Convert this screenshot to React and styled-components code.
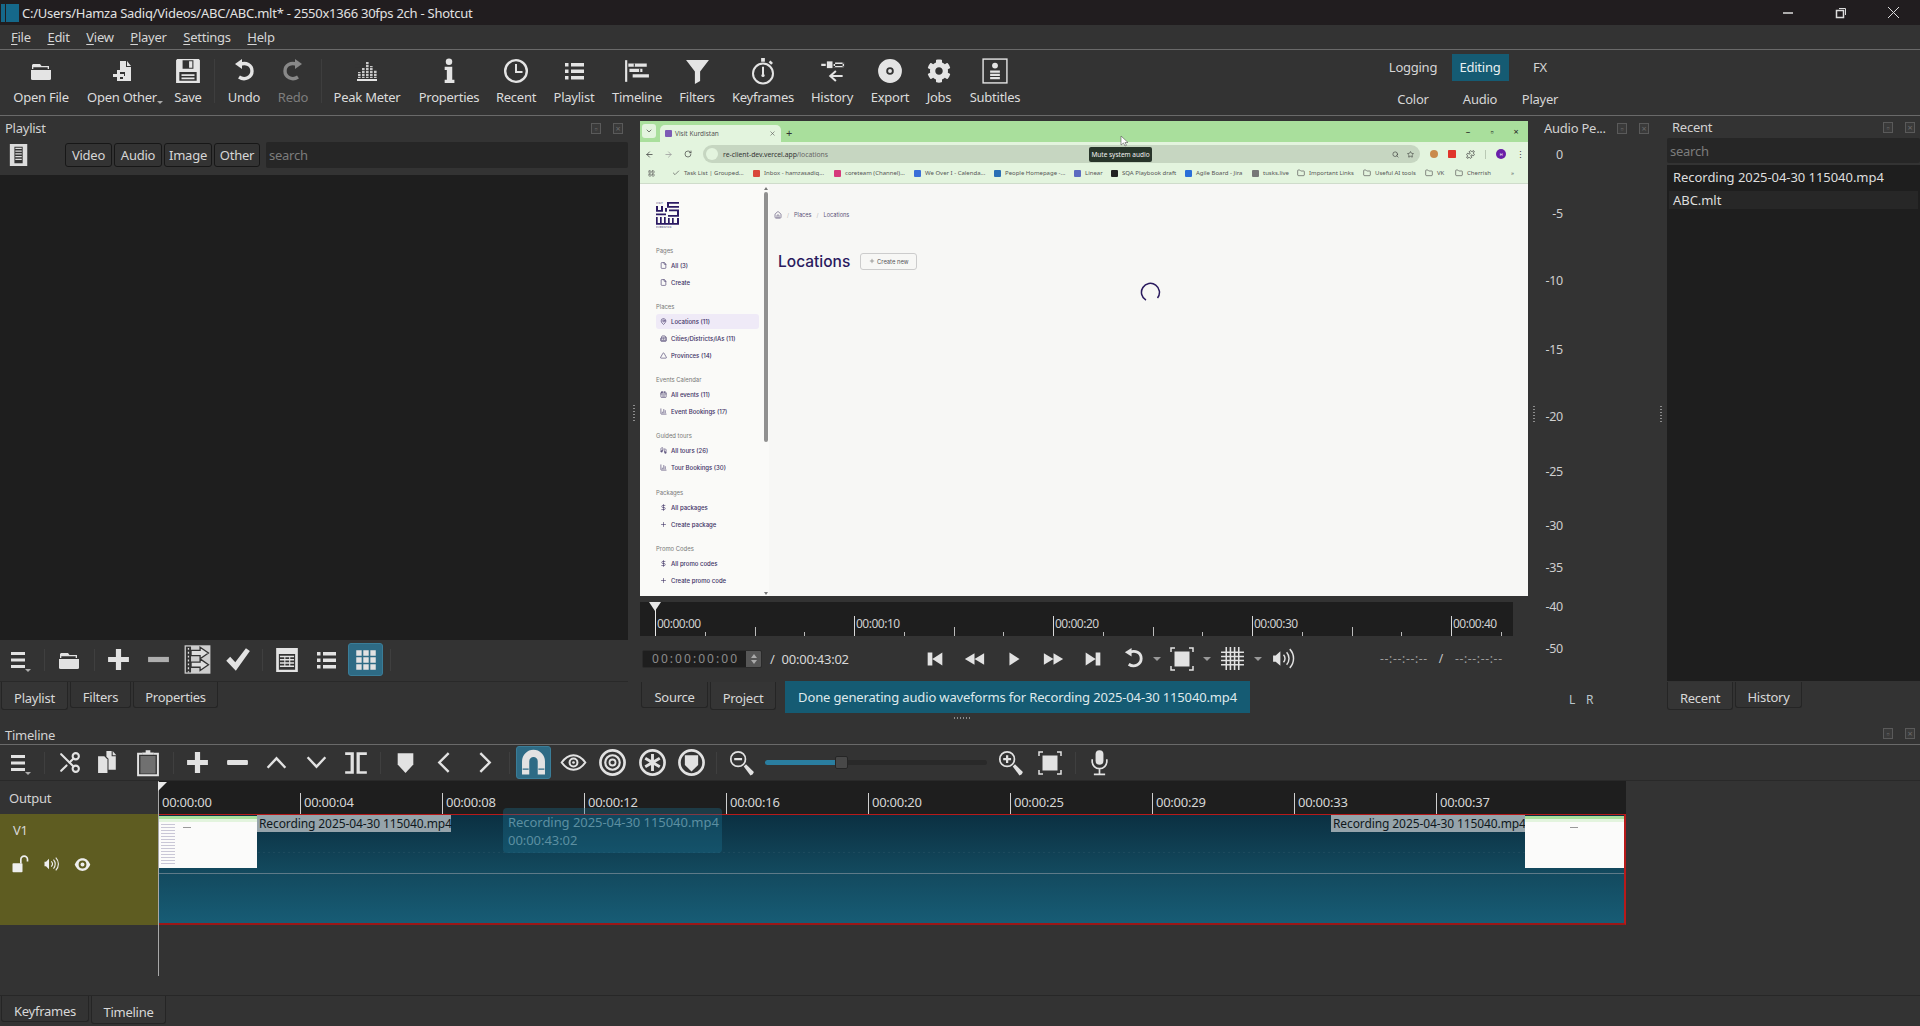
import React from 'react';
import styled, { createGlobalStyle } from 'styled-components';
import { FaCog } from 'react-icons/fa';
import { File, MapPin, Building2, Triangle, CalendarDays, BarChart3, Footprints, DollarSign, Plus, Home, ChevronDown, X, ArrowLeft, ArrowRight, RotateCw, Search, Star, Folder, LayoutGrid, Scissors, Puzzle, Check } from 'lucide-react';

const Global = createGlobalStyle`
  html, body { margin: 0; padding: 0; background: #333; }
  * { box-sizing: border-box; }
  body { font-family: "Noto Sans", "Open Sans", sans-serif; font-size: 13px; color: #dcdcdc; letter-spacing: -0.25px; }
`;

const Page = styled.div`width:1920px;height:1026px;display:flex;flex-direction:column;background:#333;overflow:hidden;position:relative;`;

/* ---------- title + menu ---------- */
const TitleBar = styled.div`height:25px;background:#211d1f;display:flex;align-items:center;flex:none;`;
const AppLogo = styled.div`width:18px;height:18px;margin:0 3px 0 1px;display:flex;gap:1px;`;
const LogoBar = styled.div`background:#15688a;flex:${p => p.$w};`;
const TitleText = styled.div`font-size:13px;color:#e2e2e2;white-space:nowrap;`;
const WinControls = styled.div`margin-left:auto;display:flex;`;
const WinBtn = styled.div`width:53px;height:25px;display:flex;align-items:center;justify-content:center;`;
const MenuBar = styled.div`height:25px;flex:none;display:flex;align-items:center;padding-left:11px;gap:16.6px;border-bottom:1px solid #6a6a6a;`;
const MenuItem = styled.div`color:#d6d6d6;u{text-underline-offset:2px;}`;

/* ---------- main toolbar ---------- */
const ToolBar = styled.div`height:66px;flex:none;display:flex;padding-left:8px;border-bottom:1px solid #6a6a6a;position:relative;`;
const ToolItem = styled.div`width:${p => p.$w}px;flex:none;display:flex;flex-direction:column;align-items:center;padding-top:8px;color:${p => p.$dim ? '#7e7e7e' : '#dcdcdc'};white-space:nowrap;`;
const ToolIcon = styled.div`height:26px;display:flex;align-items:center;justify-content:center;color:${p => p.$dim ? '#888' : '#e4e4e4'};`;
const ToolLabel = styled.div`margin-top:4px;line-height:18px;position:relative;${p => p.$caret && `&::after{content:"";position:absolute;right:-6px;bottom:2px;border-left:3px solid transparent;border-right:3px solid transparent;border-top:3px solid #aaa;}`}`;
const ToolSep = styled.div`width:${p => p.$w}px;flex:none;position:relative;display:flex;justify-content:center;padding:9px 0 12px;&::after{content:"";width:1px;background:#3e3e3e;}`;
const Workspace = styled.div`margin-left:auto;margin-right:352px;display:grid;grid-template-columns:70px 64px 56px;grid-template-rows:32px 32px;padding-top:1px;`;
const WsBtn = styled.div`display:flex;align-items:center;justify-content:center;color:#d6d6d6;${p => p.$active && 'background:#155b73;color:#e8f0f2;height:27px;width:57px;justify-self:center;align-self:center;'}`;

/* ---------- dock row ---------- */
const MainRow = styled.div`height:606px;flex:none;display:flex;`;
const DockHead = styled.div`height:24px;flex:none;display:flex;align-items:center;padding-left:${p => p.$pl || 5}px;padding-right:${p => p.$pr || 5}px;`;
const DockTitle = styled.div`color:#d2d2d2;white-space:nowrap;`;
const DockIcons = styled.div`margin-left:auto;display:flex;gap:12px;`;
const DockBtn = styled.div`width:10px;height:11px;border:1px solid #5a5a5a;color:#6a6a6a;display:flex;align-items:center;justify-content:center;font-size:9px;line-height:1;background:#3a3a3a;`;

const LeftPanel = styled.div`width:628px;flex:none;display:flex;flex-direction:column;`;
const FilterRow = styled.div`height:26px;margin-top:2px;flex:none;display:flex;align-items:center;`;
const ListIconWrap = styled.div`width:65px;flex:none;padding-left:8px;display:flex;`;
const FilterBtn = styled.div`width:${p => p.$w}px;height:24px;margin-right:2px;background:#333;border:1px solid #171717;border-radius:3px;display:flex;align-items:center;justify-content:center;flex:none;color:#d6d6d6;`;
const SearchBox = styled.div`flex:${p => p.$fixed ? 'none' : 1};height:${p => p.$h || 26}px;background:#262626;border-radius:2px;display:flex;align-items:center;padding-left:3px;color:#7c7c7c;margin-left:${p => p.$ml || 0}px;`;
const DarkList = styled.div`height:465px;margin-top:7px;background:#1e1e1e;flex:none;`;
const IconRow = styled.div`height:${p => p.$h}px;flex:none;display:flex;align-items:center;padding-bottom:${p => p.$pb || 0}px;border-bottom:1px solid #292929;`;
const IconBtn = styled.div`width:39.5px;flex:none;display:flex;justify-content:center;align-items:center;color:#e2e2e2;position:relative;`;
const ActiveSq = styled.div`width:35px;height:33px;background:#2e6b85;border:1px solid #3a7d98;border-radius:3px;display:flex;justify-content:center;align-items:center;`;
const IconSep = styled.div`width:10px;flex:none;display:flex;justify-content:center;&::after{content:"";width:1px;height:22px;background:#3f3f3f;}`;
const TabRow = styled.div`display:flex;align-items:flex-start;flex:none;padding-left:${p => p.$pl ?? 1}px;margin-top:${p => p.$mt || 0}px;gap:2px;`;
const Tab = styled.div`width:${p => p.$w}px;height:${p => p.$on ? 28 : 26}px;padding-top:4px;border:1px solid #252525;border-top:none;border-radius:0 0 3px 3px;display:flex;align-items:center;justify-content:center;color:#d8d8d8;background:${p => p.$on ? '#353535' : '#333'};`;

const Splitter = styled.div`width:${p => p.$w || 12}px;flex:none;display:flex;align-items:center;justify-content:center;padding-bottom:10px;`;
const Grip = styled.div`width:2px;height:18px;background:repeating-linear-gradient(180deg,#8d8d8d 0 1px,transparent 1px 3px);`;

const Center = styled.div`width:888px;flex:none;display:flex;flex-direction:column;padding-top:5px;`;
const Preview = styled.div`height:475px;flex:none;display:flex;flex-direction:column;position:relative;overflow:hidden;background:#f7f7f5;`;

/* chrome */
const ChromeTabs = styled.div`height:21px;flex:none;background:#a9df9c;display:flex;align-items:flex-end;`;
const TabList = styled.div`width:14px;height:14px;border-radius:3px;background:#e3f4de;margin:0 4px 4px 2px;display:flex;align-items:center;justify-content:center;color:#333;`;
const ChromeTab = styled.div`width:121px;height:17px;background:#e3f4de;border-radius:5px 5px 0 0;display:flex;align-items:center;padding:0 5px;gap:3px;font-size:6.5px;color:#555;letter-spacing:0;`;
const Fav = styled.div`width:7px;height:7px;background:${p => p.$c || '#7d5bb5'};border-radius:1px;flex:none;`;
const NewTab = styled.div`margin:0 0 2px 5px;color:#333;font-size:11px;line-height:14px;`;
const ChromeWin = styled.div`margin-left:auto;display:flex;align-self:center;`;
const ChromeWinBtn = styled.div`width:24px;text-align:center;font-size:9px;color:#222;line-height:12px;`;
const ChromeBar = styled.div`height:21px;flex:none;background:#e3f4de;display:flex;align-items:center;color:#3c3c3c;padding-top:3px;`;
const NavBtn = styled.div`width:19px;display:flex;justify-content:center;`;
const Omni = styled.div`width:717px;height:18px;margin-left:6px;border-radius:9px;background:#c6d6c1;display:flex;align-items:center;padding:0 6px 0 3px;font-size:6.8px;letter-spacing:0;color:#333;gap:5px;span{color:#666;}`;
const OmniDot = styled.div`width:12px;height:12px;border-radius:50%;background:#e3f4de;flex:none;`;
const OmniEnd = styled.div`margin-left:auto;display:flex;gap:8px;align-items:center;`;
const ExtRow = styled.div`display:flex;align-items:center;gap:10px;margin-left:10px;`;
const ExtDot = styled.div`width:${p => p.$s || 8}px;height:${p => p.$s || 8}px;border-radius:${p => p.$r ?? 50}%;background:${p => p.$c};color:#fff;font-size:4px;display:flex;align-items:center;justify-content:center;`;
const ExtSep = styled.div`width:1px;height:9px;background:#b9c9b4;`;
const Bookmarks = styled.div`height:21px;flex:none;background:#e3f4de;display:flex;align-items:center;padding-left:8px;border-bottom:1px solid #cfdccb;font-size:6px;letter-spacing:0;color:#555;white-space:nowrap;`;
const Bm = styled.div`width:${p => p.$w}px;flex:none;display:flex;align-items:center;gap:4px;overflow:hidden;`;
const WebPage = styled.div`flex:1;display:flex;min-height:0;`;
const Side = styled.div`width:129px;flex:none;display:flex;background:#fafaf8;`;
const Nav = styled.div`width:120px;flex:none;padding:17px 1px 0 16px;display:flex;flex-direction:column;`;
const NavSec = styled.div`height:13px;margin-top:${p => p.$mt}px;flex:none;font-size:5.9px;line-height:13px;letter-spacing:0;color:#777;font-family:Inter,sans-serif;`;
const NavItem = styled.div`height:${p => p.$on ? 15 : 17}px;margin:${p => p.$on ? '1px 0' : 0};flex:none;display:flex;align-items:center;gap:4px;padding-left:4px;font-size:6px;letter-spacing:0;color:#3a2f63;font-weight:500;font-family:Inter,sans-serif;border-radius:3px;background:${p => p.$on ? '#efeaf7' : 'transparent'};white-space:nowrap;`;
const Rail = styled.div`width:9px;flex:none;display:flex;flex-direction:column;align-items:center;padding:3px 0 1px 3px;`;
const Thumb = styled.div`width:4px;height:250px;background:#909090;border-radius:2px;margin-top:2px;`;
const RailArrow = styled.div`width:0;height:0;border-left:2.5px solid transparent;border-right:2.5px solid transparent;${p => p.$down ? 'border-top:3px solid #777;margin-top:auto;' : 'border-bottom:3px solid #777;'}`;
const Content = styled.div`flex:1;padding:25px 0 0 9px;display:flex;flex-direction:column;`;
const Crumbs = styled.div`height:12px;margin-left:-4px;display:flex;align-items:center;font-family:Inter,sans-serif;font-size:5.6px;letter-spacing:0;color:#5d5478;gap:5px;span{color:#bbb;}`;
const HeadRow = styled.div`display:flex;align-items:center;margin-top:30px;height:20px;gap:10px;`;
const H1 = styled.div`font-family:Inter,sans-serif;font-size:15.5px;font-weight:500;color:#2a1a5e;letter-spacing:0;margin-top:1px;`;
const CreateBtn = styled.div`width:57px;height:17px;border:1px solid #ccc;border-radius:3px;display:flex;align-items:center;justify-content:center;gap:2px;font-family:Inter,sans-serif;font-size:5.8px;letter-spacing:0;color:#555;`;
const Spinner = styled.svg`margin:11px 0 0 362px;`;
const Tooltip = styled.div`position:absolute;left:449px;top:26px;width:63px;height:15px;background:#28352a;border-radius:2px;color:#f2f2f2;font-size:6.5px;letter-spacing:0;display:flex;align-items:center;justify-content:center;`;
const Cursor = styled.svg`position:absolute;left:480px;top:14px;`;

/* player ruler and controls */
const PRuler = styled.div`height:34px;width:873px;margin-top:6px;background:#1e1e1e;flex:none;display:flex;align-items:flex-end;padding-left:15px;overflow:hidden;position:relative;`;
const Tick = styled.div`width:49.75px;flex:none;height:${p => p.$h}px;position:relative;border-left:1px solid ${p => p.$h > 12 ? '#d8d8d8' : '#bbb'};padding:1px 0 0 1px;font-size:12px;line-height:13px;letter-spacing:-0.5px;color:#cfcfcf;white-space:nowrap;`;
const PHead = styled.div`position:absolute;left:9px;top:0;width:0;height:0;border-left:6.5px solid transparent;border-right:6.5px solid transparent;border-top:9px solid #e8e8e8;`;
const PLine = styled.div`position:absolute;left:15px;top:0;width:1px;height:34px;background:#e8e8e8;`;
const Controls = styled.div`height:45px;flex:none;display:flex;align-items:center;`;
const TimeBox = styled.div`width:120px;height:18px;margin-left:2px;background:#1e1e1e;border:1px solid #2a2a2a;border-radius:2px;display:flex;align-items:center;padding-left:9px;color:#8c8c8c;letter-spacing:2.05px;font-size:12px;flex:none;white-space:nowrap;overflow:hidden;`;
const Spin = styled.div`margin-left:auto;width:15px;height:16px;flex:none;background:#565656;display:flex;flex-direction:column;align-items:center;justify-content:center;gap:2px;`;
const SpinA = styled.div`width:0;height:0;border-left:3.5px solid transparent;border-right:3.5px solid transparent;${p => p.$d ? 'border-top:4px solid #aaa;' : 'border-bottom:4px solid #aaa;'}`;
const Slash = styled.div`margin-left:${p => p.$ml || 0}px;color:#d0d0d0;`;
const TotalTime = styled.div`margin-left:7px;color:#d8d8d8;width:134px;flex:none;`;
const CtrlBtn = styled.div`width:${p => p.$w || 39.5}px;flex:none;display:flex;justify-content:center;align-items:center;color:#e2e2e2;`;
const Caret = styled.div`width:8px;flex:none;display:flex;justify-content:center;&::after{content:"";border-left:4px solid transparent;border-right:4px solid transparent;border-top:4px solid #999;}`;
const InOut = styled.div`margin-left:76px;color:#9c9c9c;font-size:12px;letter-spacing:0.65px;display:flex;gap:11px;white-space:nowrap;`;
const InOutSlash = styled.span`color:#c8c8c8;`;
const StatusRow = styled.div`display:flex;align-items:flex-start;flex:none;`;
const Status = styled.div`width:465px;height:32px;margin-left:9px;background:#155b73;color:#dfe9ec;display:flex;align-items:center;justify-content:center;letter-spacing:-0.15px;`;
const HGrip = styled.div`width:18px;height:2px;margin:4px 0 0 314px;background:repeating-linear-gradient(90deg,#8d8d8d 0 1px,transparent 1px 3px);`;

/* audio */
const AudioCol = styled.div`width:139px;flex:none;display:flex;flex-direction:column;position:relative;`;
const Scale = styled.div`margin-top:6px;display:flex;flex-direction:column;`;
const ScaleRow = styled.div`height:${p => p.$h}px;width:35px;text-align:right;line-height:18px;color:#cfcfcf;font-size:12.5px;`;
const LR = styled.div`margin-top:auto;margin-bottom:13px;padding-left:41px;display:flex;gap:11px;line-height:18px;color:#b9c6cc;font-size:12px;`;
const EdgeGrip = styled.div`position:absolute;left:${p => p.$x}px;top:290px;`;

/* recent */
const RecentCol = styled.div`flex:1;display:flex;flex-direction:column;`;
const RecentHead = styled(DockHead)`height:22px;`;
const RecentList = styled.div`height:516px;margin-top:2px;background:#1e1e1e;padding:3px 2px;flex:none;`;
const RecentItem = styled.div`height:18px;margin-bottom:5px;padding-left:4px;display:flex;align-items:center;color:#dedede;letter-spacing:-0.05px;background:${p => p.$on ? '#272727' : 'transparent'};`;

/* timeline */
const TlHead = styled.div`height:23px;flex:none;display:flex;align-items:center;padding:0 5px;border-bottom:1px solid #6a6a6a;`;
const TlTitle = styled(DockTitle)`margin-top:4px;`;
const SliderWrap = styled.div`width:222px;flex:none;height:5px;margin:0 4px;background:#292929;border-radius:3px;display:flex;align-items:center;`;
const SliderFill = styled.div`width:70px;height:5px;background:#2a7ea0;border-radius:3px 0 0 3px;`;
const SliderKnob = styled.div`width:13px;height:13px;background:#484848;border:1px solid #252525;border-radius:2px;`;
const Tracks = styled.div`height:214px;flex:none;position:relative;`;
const RulerRow = styled.div`display:flex;height:33px;`;
const OutputCell = styled.div`width:158px;flex:none;padding-left:9px;display:flex;align-items:center;color:#d4d4d4;`;
const TRuler = styled.div`width:1468px;flex:none;background:#1e1e1e;display:flex;align-items:flex-end;overflow:hidden;`;
const TTick = styled.div`width:142px;flex:none;height:21px;border-left:1px solid #cfcfcf;padding-left:3px;font-size:13px;line-height:18px;color:#d6d6d6;`;
const TrackRow = styled.div`display:flex;height:111px;`;
const TrackHead = styled.div`width:158px;flex:none;background:#5e5c21;padding:7px 0 0 13px;display:flex;flex-direction:column;`;
const TrackName = styled.div`color:#d8d8d8;line-height:18px;`;
const TrackBtns = styled.div`display:flex;align-items:center;margin:15px 0 0 -3px;gap:13px;color:#eee;`;
const Clip = styled.div`width:1468px;flex:none;display:flex;flex-direction:column;border:solid #b81a1a;border-width:1px 2px 2px 0;border-bottom-color:#9c1717;`;
const ClipTop = styled.div`height:59px;flex:none;border-bottom:1px solid #5e7a88;display:flex;align-items:flex-start;justify-content:space-between;background:repeating-linear-gradient(90deg,rgba(255,255,255,.05) 0 2px,transparent 2px 5px) 0 37px/100% 1px no-repeat,linear-gradient(180deg,#0b3042,#134a5f);`;
const ClipBottom = styled.div`flex:1;background:linear-gradient(180deg,#134a5f,#175c75);`;
const ClipSide = styled.div`display:flex;align-items:flex-start;`;
const ClipLabel = styled.div`height:17px;background:#96a4ab;color:#10181c;padding:0 1px 0 2px;line-height:17px;font-size:12px;letter-spacing:-0.1px;white-space:nowrap;width:194px;`;
const Mini = styled.div`width:99px;height:52px;background:#fbfbfa;display:flex;flex-direction:column;margin-top:1px;`;
const MiniGreen = styled.div`height:6px;flex:none;background:linear-gradient(180deg,#a9df9c 0 3px,#e3f4de 3px);`;
const MiniBody = styled.div`flex:1;display:flex;`;
const MiniSide = styled.div`width:14px;margin:2px 0 2px 3px;background:repeating-linear-gradient(180deg,#c9c7d6 0 1px,transparent 1px 3px);`;
const MiniTitle = styled.div`width:8px;height:1px;margin:5px 0 0 ${p => p.$ml}px;background:#999;`;
const ClipTip = styled.div`position:absolute;left:503px;top:27px;width:219px;height:45px;border-radius:4px;background:rgba(30,115,145,.35);color:#5c8fa1;padding:5px 5px 0;line-height:18px;font-size:13px;letter-spacing:-0.05px;white-space:nowrap;`;
const Needle = styled.div`position:absolute;left:158px;top:0;width:1px;height:195px;background:#a8a8a8;`;
const NeedleHead = styled.div`position:absolute;left:158px;top:1px;width:0;height:0;border-top:9px solid #e8e8e8;border-right:9px solid transparent;`;
const BottomTabs = styled.div`flex:1;border-top:1px solid #272727;`;

/* ---------- icons ---------- */
const Svg = ({ s = 24, w, h, children, ...r }) => <svg width={w || s} height={h || s} viewBox="0 0 24 24" fill="currentColor" {...r}>{children}</svg>;
const L = { fill: 'none', stroke: 'currentColor', strokeLinecap: 'butt' };

const Ic = {
  open: <Svg><path d="M4 5h7l1.500 2H20v3h-1.300V8.300H4.300V10H3V6z" /><path d="M2 11h20v8.500a1.500 1.500 0 0 1-1.500 1.500h-17A1.500 1.500 0 0 1 2 19.500z" /></Svg>,
  openOther: <Svg><path d="M10 2h6v6h5v14H10v-2h3v-3h2v-4h-5z" /><path d="M17 2l4 5h-4z" /><path d="M7 11h3v4h4v3h-4v4H7v-4H3v-3h4z" /></Svg>,
  save: <Svg s={26}><path fillRule="evenodd" d="M2 1h20l1 1v21H1V2z M7 2v8h10V2z M4 13v8h16v-8z" /><rect x="13" y="3" width="3" height="6" /><rect x="6" y="15" width="12" height="1.600" /><rect x="6" y="18" width="12" height="1.600" /></Svg>,
  undo: <Svg><path {...L} strokeWidth="3.400" d="M8 5.500c6-2.500 12 .5 12 6.500s-7 10-13 6" /><path d="M10 0v10L3 5z" /></Svg>,
  redo: <Svg><path {...L} strokeWidth="3.400" d="M16 5.500c-6-2.500-12 .5-12 6.500s7 10 13 6" /><path d="M14 0v10l7-5z" /></Svg>,
  peak: <Svg>{[[3, 13], [7, 9], [11, 3], [15, 7], [19, 11]].map(([x, t]) => <rect key={x} x={x} y={t} width="2.600" height={19 - t} opacity=".85" />)}<rect x="2" y="20" width="20" height="2" /><path fill="#333" d="M0 5h24v.7H0zM0 8h24v.7H0zM0 11h24v.7H0zM0 14h24v.7H0zM0 17h24v.7H0z" /></Svg>,
  info: <Svg s={26}><circle cx="12" cy="3.500" r="3" /><path d="M8 8h7v12h2v3H8v-3h2v-9H8z" /></Svg>,
  recent: <Svg s={26}><circle {...L} cx="12" cy="12" r="10" strokeWidth="2.200" /><path {...L} strokeWidth="1.800" d="M12 5.500V13h6" /></Svg>,
  list: <Svg><path d="M3 4h3.500v3.500H3zM9 4h13v3.500H9zM3 10.500h3.500V14H3zM9 10.500h13V14H9zM3 17h3.500v3.500H3zM9 17h13v3.500H9z" /></Svg>,
  timeline: <Svg s={26}><path d="M1 2h2v20H1z" /><path d="M4 5h17v3H4zM5 10h12v3H5zM8 15h15v3H8z" /><path fill="#333" d="M9 5h1v3H9zM14 10h1v3h-1z" /></Svg>,
  filter: <Svg s={25}><path d="M1 1h22l-8.500 11v9l-5 3V12z" /></Svg>,
  keyframes: <Svg s={30}><circle {...L} cx="12" cy="14" r="8" strokeWidth="1.600" /><path d="M10.500 1.500h3v3h-3zM18 3.500l2 2-1.500 1.500-2-2z" /><path {...L} strokeWidth="1.600" d="M12 8.500V15" /><circle cx="12" cy="15.500" r="1.300" /></Svg>,
  history: <Svg s={27}><rect x="7" y="3" width="5" height="6" /><path d="M2 5h4v2H2zM13 4h9v1.300h-9zM13 7h9v1.300h-9zM13 4v4h1.300V4zM21 4v4h1.300V4z" /><path {...L} strokeWidth="1.800" d="M21 16H10M15 11.500 10 16l5 4.500" /></Svg>,
  disc: <Svg s={26}><path fillRule="evenodd" d="M12 1a11 11 0 1 0 0 22a11 11 0 1 0 0-22z M12 8.500a3.500 3.500 0 1 0 0 7a3.500 3.500 0 1 0 0-7z" /><circle cx="12" cy="12" r="1.800" /></Svg>,
  subtitle: <Svg s={26}><rect {...L} x="1" y="1" width="22" height="22" strokeWidth="1.300" /><circle cx="12" cy="7" r="2.700" /><path d="M7.500 11.500h9v2h-9zM7.500 14.500h9v2h-9zM7.500 17.500h9v2h-9z" /></Svg>,
  menu: <Svg><path d="M3 4h14v3H3zM3 10.500h14v3H3zM3 17h14v3H3z" /><path d="M17 21h6l-3 3z" opacity=".7" /></Svg>,
  plus: <Svg s={25}><path d="M9.500 2h5v7.500H22v5h-7.500V22h-5v-7.500H2v-5h7.500z" /></Svg>,
  minus: <Svg s={25}><path d="M3 9.500h18a1 1 0 0 1 1 1v3a1 1 0 0 1-1 1H3a1 1 0 0 1-1-1v-3a1 1 0 0 1 1-1z" /></Svg>,
  minusDim: <Svg s={25}><path opacity=".7" d="M2 9.500h20v5H2z" /></Svg>,
  update: <Svg s={31}><path opacity=".88" d="M2 1h20v22H2z" /><path fill="#333" d="M3 2h4v20H3z" /><path stroke="#ddd" strokeWidth="1" strokeDasharray="1.500 1.500" d="M5 3v19" /><path fill="#ddd" stroke="#333" strokeWidth="1" d="M7 5h7V2.500L20.500 7 14 11.500V9H7zM7 14h7v-2.500l6.500 4.500-6.500 4.500V18H7z" /></Svg>,
  check: <Svg s={27}><path d="M2 13l3.500-3.500 4.500 5L19.500 2 23 4.500 10.500 22z" /></Svg>,
  table: <Svg s={26}><path fillRule="evenodd" d="M2 1h20v22H2z M4.500 6.500V21h15V6.500z" /><path d="M5.500 8h13v1.400h-13zM5.500 11h13v1.400h-13zM5.500 14h13v1.400h-13zM5.500 17h13v1.400h-13zM9.500 8h1v10h-1zM14 8h1v10h-1z" /></Svg>,
  grid: <Svg s={26}><path d="M3 3h5v5H3zM9.500 3h5v5h-5zM16 3h5v5h-5zM3 9.500h5v5H3zM9.500 9.500h5v5h-5zM16 9.500h5v5h-5zM3 16h5v5H3zM9.500 16h5v5h-5zM16 16h5v5h-5z" /></Svg>,
  copy: <Svg s={25}><path d="M2 6h6l3 3v13H2z" /><path d="M10 1h5v5h4v13h-7V8.500L10 6.500z" /><path d="M16 1l3.500 4H16z" /></Svg>,
  paste: <Svg s={28}><path {...L} strokeWidth="1.700" d="M7 4H3.500v18.500h17V4H17" /><rect x="5.500" y="6" width="13" height="15" opacity=".35" /><path d="M7 5V3h3V1h4v2h3v2z" /></Svg>,
  up: <Svg s={25}><path {...L} strokeWidth="2.300" d="M3.500 17 12 8l8.500 9" /></Svg>,
  down: <Svg s={25}><path {...L} strokeWidth="2.300" d="M3.500 7 12 16l8.500-9" /></Svg>,
  split: <Svg s={26}><path d="M2 2h8v20H2v-2.500h5v-15H2zM22 2v2.500h-6.500v15H22V22H12.500V2z" /></Svg>,
  marker: <Svg s={25}><path d="M4.500 3h15v11L12 22 4.500 14z" /></Svg>,
  prev: <Svg s={25}><path {...L} strokeWidth="2.300" d="M16 3 7 12l9 9" /></Svg>,
  next: <Svg s={25}><path {...L} strokeWidth="2.300" d="m8 3 9 9-9 9" /></Svg>,
  magnet: <Svg s={29}><path d="M2.500 22V11a9.500 9.500 0 0 1 19 0v11h-6V11a3.500 3.500 0 0 0-7 0v11z" /><path fill="#2e6b85" d="M3 17h5v1H3zM16 17h5v1h-5z" /></Svg>,
  ripple: <Svg s={27}><path {...L} strokeWidth="1.800" d="M1.500 12C5 7 8.500 5.500 12 5.500S19 7 22.500 12C19 17 15.500 18.500 12 18.500S5 17 1.500 12z" /><circle {...L} cx="12" cy="12" r="3.500" strokeWidth="1.800" /><circle cx="12" cy="12" r="1.200" /></Svg>,
  target: <Svg s={29}><circle {...L} cx="12" cy="12" r="10" strokeWidth="2.200" /><circle {...L} cx="12" cy="12" r="6" strokeWidth="1.800" /><circle {...L} cx="12" cy="12" r="2.500" strokeWidth="1.500" /></Svg>,
  rippleAll: <Svg s={29}><circle {...L} cx="12" cy="12" r="10" strokeWidth="2.200" /><path {...L} strokeWidth="2.400" d="M12 5v14M6 8.500l12 7M18 8.500l-12 7" /></Svg>,
  ringMarker: <Svg s={29}><circle {...L} cx="12" cy="12" r="10" strokeWidth="2.200" /><path d="M6.500 6h11v8L12 19.500 6.500 14z" /></Svg>,
  zoomOut: <Svg s={27}><circle {...L} cx="9" cy="9" r="6.500" strokeWidth="1.500" /><path d="M5.500 8h7v2h-7z" /><path d="m14 15.500 2-2 7 7-1 2-2 1z" /></Svg>,
  zoomIn: <Svg s={27}><circle {...L} cx="9" cy="9" r="6.500" strokeWidth="1.500" /><path d="M5.500 8H8V5.500h2V8h2.500v2H10v2.500H8V10H5.500z" /><path d="m14 15.500 2-2 7 7-1 2-2 1z" /></Svg>,
  fit: <Svg s={24}><rect x="4.500" y="4.500" width="15" height="15" /><path {...L} strokeWidth="1.500" d="M1 5V1h4M19 1h4v4M23 19v4h-4M5 23H1v-4" /></Svg>,
  mic: <Svg s={27}><rect x="8.500" y="1" width="7" height="13" rx="3.500" /><path {...L} strokeWidth="1.500" d="M5.500 9v2a6.500 6.500 0 0 0 13 0V9M12 17.500V22M7 22.500h10" /></Svg>,
  skipB: <Svg w={16} h={14} preserveAspectRatio="none"><path d="M1 1h7v22H1zM8 12 23 1v22z" /></Svg>,
  rew: <Svg w={21} h={14} preserveAspectRatio="none"><path d="M12 12 23 2v20zM1 12 12 2v20z" /></Svg>,
  play: <Svg w={11} h={14} preserveAspectRatio="none"><path d="M1 1l22 11L1 23z" /></Svg>,
  ff: <Svg w={21} h={14} preserveAspectRatio="none"><path d="M1 2l11 10L1 22zM12 2l11 10-11 10z" /></Svg>,
  skipF: <Svg w={16} h={14} preserveAspectRatio="none"><path d="M1 1l15 11L1 23zM16 1h7v22h-7z" /></Svg>,
  loop: <Svg s={23}><path {...L} strokeWidth="3" d="M8 5.500c6-2.500 12 .5 12 6.500s-7 10-13 6" /><path d="M10 1v9L3 5.500z" /></Svg>,
  gridLines: <Svg s={25}><path {...L} strokeWidth="1.500" d="M6 1v22M10 1v22M14 1v22M18 1v22M1 6h22M1 10h22M1 14h22M1 18h22" /></Svg>,
  volume: <Svg s={25}><path d="M2 9h2.500l4.500-4v14l-4.500-4H2z" /><path {...L} strokeWidth="1.400" d="M12 8.500a5 5 0 0 1 0 7M15 6a9 9 0 0 1 0 12M18 3a13 13 0 0 1 0 18" /></Svg>,
  lock: <Svg s={20}><rect x="3" y="11" width="12" height="11" rx="1" /><path {...L} strokeWidth="2" d="M13 11V6.500a4 4 0 0 1 8 0V9" /></Svg>,
  vol: <Svg s={18}><path d="M2 9h2l4-4v14l-4-4H2z" /><path {...L} strokeWidth="1.500" d="M11 8.500a5 5 0 0 1 0 7M14 6a9 9 0 0 1 0 12M17 3.500a12 12 0 0 1 0 17" /></Svg>,
  eye: <Svg s={17}><path fillRule="evenodd" d="M1 12C4 5 8 3 12 3s8 2 11 9c-3 7-7 9-11 9s-8-2-11-9z M12 6.500a5.500 5.500 0 1 0 0 11a5.500 5.500 0 1 0 0-11z" /><circle cx="12" cy="12" r="2.800" /></Svg>,
  playlistDoc: <Svg w={22} h={24}><path fillRule="evenodd" d="M2 0h19v24H2z M7 3v18h9V3z" /><path d="M8 4h7v1.500H8zM8 7h7v1.500H8zM8 10h7v1.500H8zM8 13h7v1.500H8zM8 16h7v1.500H8z" /></Svg>,
};

const Dock = () => <DockIcons><DockBtn>▫</DockBtn><DockBtn>×</DockBtn></DockIcons>;

const tools = [
  ['Open File', 66, Ic.open], ['Open Other', 96, Ic.openOther, false, true], ['Save', 36, Ic.save], 16, ['Undo', 44, Ic.undo], ['Redo', 54, Ic.redo, true], 2,
  ['Peak Meter', 90, Ic.peak], ['Properties', 74, Ic.info], ['Recent', 60, Ic.recent], ['Playlist', 56, Ic.list], ['Timeline', 70, Ic.timeline],
  ['Filters', 50, Ic.filter], ['Keyframes', 82, Ic.keyframes], ['History', 56, Ic.history], ['Export', 60, Ic.disc], ['Jobs', 38, <FaCog size={24} />], ['Subtitles', 74, Ic.subtitle],
];

const navData = [
  [14.5, 'Pages', [[File, 'All  (3)'], [File, 'Create']]],
  [9.3, 'Places', [[MapPin, 'Locations  (11)', true], [Building2, 'Cities/Districts/IAs  (11)'], [Triangle, 'Provinces  (14)']]],
  [9.3, 'Events Calendar', [[CalendarDays, 'All events  (11)'], [BarChart3, 'Event Bookings  (17)']]],
  [9.3, 'Guided tours', [[Footprints, 'All tours  (26)'], [BarChart3, 'Tour Bookings  (30)']]],
  [9.3, 'Packages', [[DollarSign, 'All packages'], [Plus, 'Create package']]],
  [9.3, 'Promo Codes', [[DollarSign, 'All promo codes'], [Plus, 'Create promo code']]],
];

const bookmarks = [
  [24, <LayoutGrid size={7} />, ''], [81, <Check size={8} />, 'Task List | Grouped...'], [81, <Fav $c="#d9483b" />, 'Inbox - hamzasadiq...'], [80, <Fav $c="#d63a7b" />, 'coreteam (Channel)...'],
  [80, <Fav $c="#3a6fd8" />, 'We Over I - Calenda...'], [80, <Fav $c="#2a6fb5" />, 'People Homepage -...'], [37, <Fav $c="#5c6bc0" />, 'Linear'], [74, <Fav $c="#222" />, 'SQA Playbook draft'],
  [67, <Fav $c="#2a6fd8" />, 'Agile Board - Jira'], [45, <Fav $c="#777" />, 'tusks.live'], [66, <Folder size={8} />, 'Important Links'], [62, <Folder size={8} />, 'Useful AI tools'],
  [30, <Folder size={8} />, 'VK'], [56, <Folder size={8} />, 'Cherrish'], [12, null, '»'],
];

const Logo = () => (
  <svg width="24" height="28" viewBox="0 0 24 28" fill="#2b1a63">
    <path d="M11 1h12v1.700H13v2.400h10v1.700H11zM0 5h2v4h3V5h2v5.700H0zM9 7h2v3.700H9zM13 8.500h10v1.700H13zM21 10h2v4h-2zM0 12.500h10v1.700H0zM12 14h11v1.700H12zM0 16h1.700v6H0zM4 16h1.700v6H4zM8 16h1.700v6H8zM12 17h1.700v5H12zM16 17h1.700v5H16zM21 17h2v5h-2zM0 22h23v1.700H0z" />
    <text x="0" y="3" fontSize="2.400" fontFamily="Inter, sans-serif" letterSpacing=".2">VISIT</text>
    <text x="0" y="27" fontSize="2.400" fontFamily="Inter, sans-serif" letterSpacing=".2">KURDISTAN</text>
  </svg>
);

const ChromeWeb = () => (
  <Preview>
    <ChromeTabs>
      <TabList><ChevronDown size={8} /></TabList>
      <ChromeTab><Fav /><span>Visit Kurdistan</span><X size={7} style={{ marginLeft: 'auto' }} /></ChromeTab>
      <NewTab>+</NewTab>
      <ChromeWin><ChromeWinBtn>–</ChromeWinBtn><ChromeWinBtn>▫</ChromeWinBtn><ChromeWinBtn>×</ChromeWinBtn></ChromeWin>
    </ChromeTabs>
    <ChromeBar>
      <NavBtn><ArrowLeft size={9} /></NavBtn><NavBtn><ArrowRight size={9} color="#999" /></NavBtn><NavBtn><RotateCw size={8} /></NavBtn>
      <Omni><OmniDot /><div>re-client-dev.vercel.app<span>/locations</span></div>
        <OmniEnd><Search size={7} /><Star size={7} /></OmniEnd></Omni>
      <ExtRow><ExtDot $c="#c98a4b" /><ExtDot $c="#e0352b" $r={10} /><Puzzle size={9} /><ExtSep /><ExtDot $c="#6a1fa8" $s={10}>H</ExtDot><span style={{ fontSize: 9, lineHeight: 1 }}>⋮</span></ExtRow>
    </ChromeBar>
    <Bookmarks>
      {bookmarks.map(([w, ic, t], i) => <Bm key={i} $w={w}>{ic}{t}</Bm>)}
    </Bookmarks>
    <WebPage>
      <Side>
        <Nav>
          <Logo />
          {navData.map(([mt, name, items]) => (
            <React.Fragment key={name}>
              <NavSec $mt={mt}>{name}</NavSec>
              {items.map(([I, t, on]) => <NavItem key={t} $on={on}><I size={7} />{t}</NavItem>)}
            </React.Fragment>
          ))}
        </Nav>
        <Rail><RailArrow /><Thumb /><RailArrow $down /></Rail>
      </Side>
      <Content>
        <Crumbs><Home size={8} /><span>/</span>Places<span>/</span>Locations</Crumbs>
        <HeadRow><H1>Locations</H1><CreateBtn><Plus size={6} />Create new</CreateBtn></HeadRow>
        <Spinner width="21" height="21" viewBox="0 0 21 21"><path d="M17.500 16A9 9 0 1 0 6 18.200" fill="none" stroke="#2a1a5e" strokeWidth="1.500" /></Spinner>
      </Content>
    </WebPage>
    <Tooltip>Mute system audio</Tooltip>
    <Cursor width="8" height="12" viewBox="0 0 8 12"><path d="M1 1v9l2.500-2 1.500 3 1.500-.7L5 7.500h3z" fill="#fff" stroke="#555" strokeWidth=".6" /></Cursor>
  </Preview>
);

const rulerTicks = Array.from({ length: 18 }, (_, i) => i);
const tlLabels = ['00:00:00', '00:00:04', '00:00:08', '00:00:12', '00:00:16', '00:00:20', '00:00:25', '00:00:29', '00:00:33', '00:00:37'];
const scale = [['0', 59], ['-5', 67], ['-10', 69], ['-15', 67], ['-20', 55], ['-25', 54], ['-30', 42], ['-35', 39], ['-40', 42], ['-50', 18]];

const MiniThumb = ({ side }) => (
  <Mini><MiniGreen /><MiniBody>{side ? <><MiniSide /><MiniTitle $ml={8} /></> : <MiniTitle $ml={45} />}</MiniBody></Mini>
);

export default function App() {
  return (
    <Page>
      <Global />
      <TitleBar>
        <AppLogo><LogoBar $w={1} /><LogoBar $w={3} /></AppLogo>
        <TitleText>C:/Users/Hamza Sadiq/Videos/ABC/ABC.mlt* - 2550x1366 30fps 2ch - Shotcut</TitleText>
        <WinControls>
          <WinBtn><svg width="12" height="12"><path d="M1 6h10" stroke="#ddd" strokeWidth="1.500" /></svg></WinBtn>
          <WinBtn><svg width="12" height="12" fill="none" stroke="#ddd"><rect x="1.500" y="3.500" width="7" height="7" strokeWidth="1.500" /><path d="M4 1.500h6.500V8" /></svg></WinBtn>
          <WinBtn><svg width="13" height="13" stroke="#ddd"><path d="M1 1l11 11M12 1 1 12" /></svg></WinBtn>
        </WinControls>
      </TitleBar>
      <MenuBar>
        {['File', 'Edit', 'View', 'Player', 'Settings', 'Help'].map(m => <MenuItem key={m}><u>{m[0]}</u>{m.slice(1)}</MenuItem>)}
      </MenuBar>
      <ToolBar>
        {tools.map((t, i) => typeof t === 'number' ? <ToolSep key={i} $w={t} /> : (
          <ToolItem key={t[0]} $w={t[1]} $dim={t[3]}><ToolIcon $dim={t[3]}>{t[2]}</ToolIcon><ToolLabel $caret={t[4]}>{t[0]}</ToolLabel></ToolItem>
        ))}
        <Workspace>
          <WsBtn>Logging</WsBtn><WsBtn $active>Editing</WsBtn><WsBtn>FX</WsBtn>
          <WsBtn>Color</WsBtn><WsBtn>Audio</WsBtn><WsBtn>Player</WsBtn>
        </Workspace>
      </ToolBar>

      <MainRow>
        <LeftPanel>
          <DockHead><DockTitle>Playlist</DockTitle><Dock /></DockHead>
          <FilterRow>
            <ListIconWrap>{Ic.playlistDoc}</ListIconWrap>
            <FilterBtn $w={47}>Video</FilterBtn><FilterBtn $w={48}>Audio</FilterBtn><FilterBtn $w={48}>Image</FilterBtn><FilterBtn $w={46}>Other</FilterBtn>
            <SearchBox $ml={4}>search</SearchBox>
          </FilterRow>
          <DarkList />
          <IconRow $h={42} $pb={2}>
            <IconBtn>{Ic.menu}</IconBtn><IconSep /><IconBtn>{Ic.open}</IconBtn><IconSep />
            <IconBtn>{Ic.plus}</IconBtn><IconBtn>{Ic.minusDim}</IconBtn><IconBtn>{Ic.update}</IconBtn><IconBtn>{Ic.check}</IconBtn><IconSep />
            <IconBtn>{Ic.table}</IconBtn><IconBtn>{Ic.list}</IconBtn><IconBtn><ActiveSq>{Ic.grid}</ActiveSq></IconBtn><IconSep />
          </IconRow>
          <TabRow><Tab $on $w={67}>Playlist</Tab><Tab $w={61}>Filters</Tab><Tab $w={85}>Properties</Tab></TabRow>
        </LeftPanel>
        <Splitter><Grip /></Splitter>
        <Center>
          <ChromeWeb />
          <PRuler>
            {rulerTicks.map(i => {
              const main = i % 4 === 0;
              return <Tick key={i} $h={main ? 20 : i % 2 === 0 ? 9 : 4}>{main ? `00:00:${String(i / 4 * 10).padStart(2, '0')}` : ''}</Tick>;
            })}
            <PLine /><PHead />
          </PRuler>
          <Controls>
            <TimeBox>00:00:00:00<Spin><SpinA /><SpinA $d /></Spin></TimeBox>
            <Slash $ml={8}>/</Slash>
            <TotalTime>00:00:43:02</TotalTime>
            <CtrlBtn>{Ic.skipB}</CtrlBtn><CtrlBtn>{Ic.rew}</CtrlBtn><CtrlBtn>{Ic.play}</CtrlBtn><CtrlBtn>{Ic.ff}</CtrlBtn><CtrlBtn>{Ic.skipF}</CtrlBtn>
            <CtrlBtn $w={40}>{Ic.loop}</CtrlBtn><Caret /><CtrlBtn $w={42}>{Ic.fit}</CtrlBtn><Caret /><CtrlBtn $w={43}>{Ic.gridLines}</CtrlBtn><Caret /><CtrlBtn $w={42}>{Ic.volume}</CtrlBtn>
            <InOut><span>--:--:--:--</span><InOutSlash>/</InOutSlash><span>--:--:--:--</span></InOut>
          </Controls>
          <StatusRow>
            <TabRow $mt={1}><Tab $w={67}>Source</Tab><Tab $on $w={66}>Project</Tab></TabRow>
            <Status>Done generating audio waveforms for Recording 2025-04-30 115040.mp4</Status>
          </StatusRow>
          <HGrip />
        </Center>
        <AudioCol>
          <DockHead $pl={16} $pr={18}><DockTitle>Audio Pe...</DockTitle><Dock /></DockHead>
          <Scale>{scale.map(([t, h]) => <ScaleRow key={t} $h={h}>{t}</ScaleRow>)}</Scale>
          <LR><span>L</span><span>R</span></LR>
          <EdgeGrip $x={5}><Grip /></EdgeGrip>
          <EdgeGrip $x={132}><Grip /></EdgeGrip>
        </AudioCol>
        <RecentCol>
          <RecentHead><DockTitle>Recent</DockTitle><Dock /></RecentHead>
          <SearchBox $h={25} $fixed>search</SearchBox>
          <RecentList>
            <RecentItem>Recording 2025-04-30 115040.mp4</RecentItem>
            <RecentItem $on>ABC.mlt</RecentItem>
          </RecentList>
          <TabRow $pl={0} $mt={1}><Tab $on $w={66}>Recent</Tab><Tab $w={67}>History</Tab></TabRow>
        </RecentCol>
      </MainRow>

      <TlHead><TlTitle>Timeline</TlTitle><Dock /></TlHead>
      <IconRow $h={36}>
        <IconBtn>{Ic.menu}</IconBtn><IconSep /><IconBtn><Scissors size={25} strokeWidth={2} style={{ transform: 'scaleX(-1)' }} /></IconBtn><IconBtn>{Ic.copy}</IconBtn><IconBtn>{Ic.paste}</IconBtn><IconSep />
        <IconBtn>{Ic.plus}</IconBtn><IconBtn>{Ic.minus}</IconBtn><IconBtn>{Ic.up}</IconBtn><IconBtn>{Ic.down}</IconBtn><IconBtn>{Ic.split}</IconBtn><IconSep />
        <IconBtn>{Ic.marker}</IconBtn><IconBtn>{Ic.prev}</IconBtn><IconBtn>{Ic.next}</IconBtn><IconSep />
        <IconBtn><ActiveSq>{Ic.magnet}</ActiveSq></IconBtn><IconBtn>{Ic.ripple}</IconBtn><IconBtn>{Ic.target}</IconBtn><IconBtn>{Ic.rippleAll}</IconBtn><IconBtn>{Ic.ringMarker}</IconBtn><IconSep />
        <IconBtn>{Ic.zoomOut}</IconBtn>
        <SliderWrap><SliderFill /><SliderKnob /></SliderWrap>
        <IconBtn>{Ic.zoomIn}</IconBtn><IconBtn>{Ic.fit}</IconBtn><IconSep /><IconBtn>{Ic.mic}</IconBtn>
      </IconRow>
      <Tracks>
        <RulerRow>
          <OutputCell>Output</OutputCell>
          <TRuler>{tlLabels.map(l => <TTick key={l}>{l}</TTick>)}</TRuler>
        </RulerRow>
        <TrackRow>
          <TrackHead>
            <TrackName>V1</TrackName>
            <TrackBtns>{Ic.lock}{Ic.vol}{Ic.eye}</TrackBtns>
          </TrackHead>
          <Clip>
            <ClipTop>
              <ClipSide><MiniThumb side /><ClipLabel>Recording 2025-04-30 115040.mp4</ClipLabel></ClipSide>
              <ClipSide><ClipLabel>Recording 2025-04-30 115040.mp4</ClipLabel><MiniThumb /></ClipSide>
            </ClipTop>
            <ClipBottom />
          </Clip>
        </TrackRow>
        <ClipTip>Recording 2025-04-30 115040.mp4<br />00:00:43:02</ClipTip>
        <Needle /><NeedleHead />
      </Tracks>
      <BottomTabs>
        <TabRow><Tab $w={88}>Keyframes</Tab><Tab $on $w={75}>Timeline</Tab></TabRow>
      </BottomTabs>
    </Page>
  );
}
